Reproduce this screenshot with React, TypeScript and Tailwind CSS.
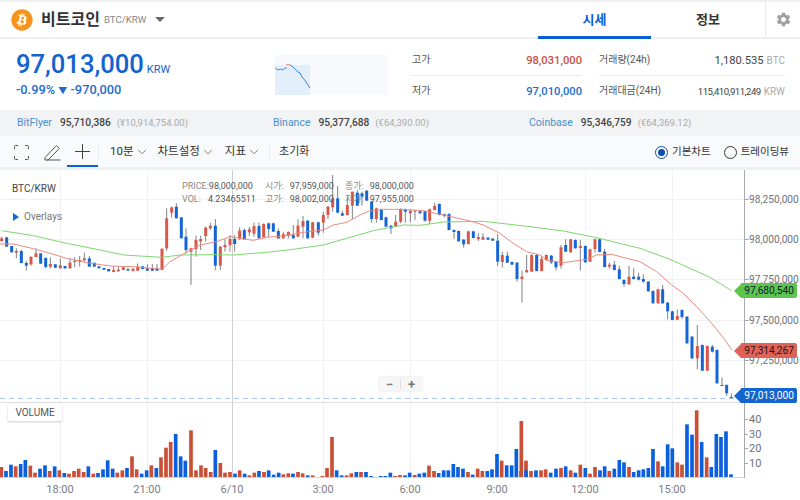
import React from 'react';
import { ChevronDown } from 'lucide-react';
import { FaBitcoin } from 'react-icons/fa';
import { MdSettings } from 'react-icons/md';

type Candle = [number, number, number, number, number, 'r' | 'b'];

const RED = '#d9574b';
const BLUE = '#1565d4';
const VOL_RED = '#c94f36';
const VOL_BLUE = '#0a5fdc';

// x, high, low, body top, body bottom, colour. Units are 1/3 px from the chart's corner.
const candlesA: Candle[] = [
  [5, 200, 215, 205, 213, 'r'], [20, 202, 230, 202, 230, 'b'], [35, 228, 247, 228, 247, 'b'], [49, 235, 265, 243, 248, 'r'],
  [64, 240, 280, 243, 279, 'b'], [79, 272, 302, 279, 287, 'b'], [93, 260, 287, 260, 283, 'r'], [108, 235, 262, 250, 261, 'r'],
  [122, 250, 281, 250, 281, 'b'], [137, 262, 295, 264, 291, 'b'], [151, 262, 295, 282, 290, 'r'], [166, 283, 294, 283, 293, 'b'],
  [181, 265, 296, 286, 295, 'r'], [195, 288, 296, 288, 295, 'b'], [210, 265, 296, 278, 295, 'r'], [224, 262, 292, 273, 276, 'r'],
  [239, 258, 290, 270, 275, 'r'], [253, 248, 275, 265, 271, 'r'], [268, 258, 290, 265, 290, 'b'], [283, 278, 290, 278, 290, 'b'],
  [297, 289, 295, 289, 295, 'b'], [312, 294, 299, 294, 299, 'b'], [326, 297, 304, 297, 304, 'b'], [341, 289, 307, 300, 306, 'r'],
  [355, 288, 305, 299, 304, 'r'], [370, 290, 301, 292, 300, 'r'], [384, 294, 303, 298, 302, 'b'], [399, 295, 304, 296, 303, 'r'],
  [413, 280, 303, 290, 302, 'r'], [428, 288, 298, 289, 297, 'b'], [442, 283, 303, 295, 302, 'b'], [457, 282, 303, 294, 302, 'b'],
  [471, 282, 303, 295, 302, 'b'], [486, 236, 301, 236, 300, 'r'], [500, 115, 242, 145, 235, 'r'], [515, 110, 143, 112, 128, 'r'],
  [529, 100, 145, 110, 145, 'b'], [544, 142, 205, 142, 205, 'b'], [558, 175, 250, 200, 240, 'b'], [573, 233, 345, 235, 245, 'r'],
  [588, 197, 260, 210, 237, 'r'], [602, 197, 240, 207, 214, 'r'], [617, 170, 215, 173, 198, 'r'], [631, 158, 180, 167, 175, 'r'],
  [646, 147, 300, 167, 287, 'b'], [661, 228, 300, 230, 287, 'r'], [675, 208, 245, 225, 232, 'r'], [690, 195, 245, 207, 225, 'r'],
  [704, 195, 245, 207, 222, 'b'], [719, 172, 210, 182, 207, 'r'], [733, 175, 209, 180, 208, 'b'], [748, 170, 198, 178, 187, 'r'],
  [762, 158, 200, 168, 191, 'r'], [777, 158, 205, 168, 205, 'b'], [791, 160, 203, 162, 202, 'r'],
];

const candlesB: Candle[] = [
  [-4, 158, 200, 160, 177, 'b'], [10, 158, 186, 160, 185, 'b'], [25, 175, 206, 183, 205, 'b'], [40, 185, 206, 192, 205, 'r'],
  [55, 184, 205, 186, 198, 'r'], [70, 165, 206, 195, 205, 'b'], [84, 148, 202, 167, 200, 'r'], [99, 138, 205, 153, 170, 'r'],
  [113, 150, 206, 152, 205, 'b'], [128, 155, 204, 157, 203, 'r'], [145, 155, 197, 157, 188, 'b'], [160, 125, 188, 135, 158, 'r'],
  [174, 108, 147, 110, 135, 'r'], [188, 15, 125, 85, 112, 'r'], [203, 48, 130, 85, 128, 'b'], [217, 122, 138, 130, 137, 'b'],
  [232, 80, 136, 105, 135, 'r'], [247, 65, 147, 65, 107, 'r'], [262, 60, 108, 68, 107, 'b'], [276, 65, 107, 70, 80, 'b'],
  [290, 60, 93, 62, 92, 'b'], [305, 93, 158, 95, 147, 'b'], [319, 113, 158, 115, 147, 'r'], [334, 116, 151, 118, 150, 'b'],
  [348, 140, 171, 142, 170, 'b'], [363, 165, 192, 167, 175, 'b'], [377, 135, 171, 155, 170, 'r'], [392, 115, 160, 117, 155, 'r'],
  [406, 116, 158, 118, 125, 'b'], [421, 120, 157, 122, 130, 'r'], [435, 120, 150, 122, 124, 'r'], [450, 122, 131, 124, 130, 'b'],
  [465, 122, 155, 124, 152, 'b'], [479, 116, 162, 118, 152, 'r'], [494, 98, 121, 108, 120, 'r'], [508, 100, 136, 102, 135, 'b'],
  [523, 131, 142, 133, 137, 'b'], [537, 130, 181, 132, 180, 'b'], [552, 178, 207, 180, 186, 'b'], [566, 181, 215, 183, 214, 'b'],
  [581, 207, 233, 209, 223, 'b'], [595, 182, 223, 184, 222, 'r'], [610, 182, 205, 184, 204, 'b'], [625, 190, 213, 201, 207, 'r'],
  [639, 190, 210, 201, 209, 'r'], [654, 201, 210, 203, 209, 'b'], [668, 204, 213, 206, 212, 'b'], [683, 192, 288, 212, 275, 'b'],
  [697, 245, 292, 255, 276, 'r'], [712, 245, 279, 257, 278, 'b'], [726, 274, 285, 276, 284, 'b'], [741, 276, 335, 278, 327, 'b'],
  [756, 302, 398, 320, 327, 'r'], [770, 255, 308, 300, 307, 'r'],
];

const candlesC: Candle[] = [
  [5, 253, 306, 255, 305, 'r'], [20, 253, 304, 255, 303, 'b'], [35, 258, 304, 267, 303, 'r'], [49, 253, 272, 255, 271, 'r'],
  [64, 255, 282, 257, 277, 'b'], [78, 273, 302, 275, 292, 'b'], [93, 225, 296, 232, 287, 'r'], [107, 208, 246, 225, 245, 'b'],
  [122, 207, 248, 208, 247, 'r'], [136, 208, 236, 210, 235, 'b'], [151, 210, 302, 228, 234, 'r'], [166, 226, 278, 228, 277, 'b'],
  [180, 236, 276, 238, 275, 'r'], [195, 206, 248, 208, 237, 'r'], [209, 206, 247, 208, 246, 'b'], [224, 237, 292, 245, 291, 'b'],
  [238, 278, 296, 284, 290, 'r'], [253, 273, 301, 284, 300, 'b'], [268, 287, 328, 298, 327, 'b'], [282, 328, 350, 330, 342, 'b'],
  [297, 288, 344, 320, 343, 'r'], [311, 295, 328, 320, 327, 'b'], [326, 308, 332, 320, 329, 'b'], [340, 313, 338, 327, 335, 'b'],
  [355, 333, 365, 335, 364, 'b'], [369, 361, 401, 363, 400, 'b'], [384, 356, 401, 358, 400, 'r'], [398, 345, 401, 358, 400, 'b'],
  [413, 396, 448, 398, 424, 'b'], [427, 422, 451, 424, 450, 'b'], [442, 418, 450, 438, 449, 'r'], [456, 418, 447, 420, 441, 'b'],
  [471, 438, 521, 440, 520, 'b'], [486, 498, 568, 500, 565, 'b'], [502, 465, 598, 528, 565, 'r'], [517, 523, 603, 525, 602, 'b'],
  [532, 526, 603, 528, 602, 'r'], [547, 525, 548, 530, 545, 'b'], [561, 538, 641, 540, 640, 'b'], [576, 622, 648, 645, 647, 'b'],
  [590, 643, 678, 645, 670, 'b'], [604, 670, 685, 681, 685, 'b'],
];

// x, top, colour for the volume pane; the bars stand on y = 922.
const volumeA: [number, number, 'r' | 'b'][] = [
  [4, 381, 'r'], [18, 393, 'b'], [33, 374, 'b'], [47, 379, 'r'], [62, 372, 'b'], [76, 360, 'b'], [91, 377, 'r'], [105, 398, 'r'],
  [120, 386, 'b'], [135, 376, 'b'], [149, 393, 'r'], [164, 379, 'b'], [178, 391, 'r'], [193, 399, 'b'], [207, 401, 'r'], [222, 393, 'r'],
  [236, 386, 'r'], [251, 396, 'r'], [265, 379, 'b'], [280, 401, 'r'], [294, 399, 'b'], [309, 388, 'b'], [323, 361, 'b'], [338, 386, 'b'],
  [352, 398, 'r'], [367, 391, 'r'], [381, 384, 'b'], [396, 349, 'r'], [410, 388, 'r'], [425, 401, 'b'], [440, 391, 'b'], [454, 376, 'r'],
  [469, 384, 'b'], [483, 352, 'r'], [498, 323, 'r'], [512, 306, 'r'], [527, 282, 'b'], [542, 349, 'b'], [556, 362, 'b'], [573, 271, 'r'],
  [588, 391, 'r'], [603, 376, 'r'], [617, 384, 'r'], [632, 396, 'r'], [646, 330, 'b'], [661, 369, 'r'], [675, 398, 'r'], [690, 396, 'r'],
  [705, 401, 'b'], [719, 391, 'r'], [734, 401, 'b'], [748, 406, 'r'], [763, 398, 'r'], [777, 393, 'b'], [792, 396, 'r'], [806, 391, 'b'],
];

const volumeB: [number, number, 'r' | 'b'][] = [
  [11, 404, 'b'], [26, 398, 'b'], [40, 403, 'r'], [55, 400, 'r'], [69, 401, 'b'], [84, 396, 'r'], [98, 400, 'r'], [113, 406, 'b'],
  [128, 406, 'r'], [142, 411, 'b'], [157, 408, 'r'], [171, 384, 'r'], [186, 291, 'r'], [200, 391, 'b'], [215, 406, 'b'], [230, 406, 'r'],
  [244, 400, 'r'], [259, 396, 'b'], [273, 396, 'r'], [288, 396, 'b'], [303, 408, 'b'], [317, 411, 'r'], [332, 408, 'b'], [346, 408, 'b'],
  [361, 398, 'b'], [375, 408, 'r'], [390, 405, 'r'], [405, 406, 'b'], [419, 398, 'b'], [434, 405, 'r'], [448, 401, 'b'], [463, 398, 'b'],
  [477, 377, 'r'], [492, 393, 'r'], [506, 399, 'b'], [521, 391, 'b'], [535, 391, 'b'], [550, 372, 'b'], [564, 381, 'b'], [579, 386, 'b'],
  [594, 396, 'r'], [608, 404, 'b'], [623, 386, 'r'], [637, 393, 'r'], [652, 393, 'b'], [666, 388, 'b'], [681, 342, 'b'], [695, 362, 'r'],
  [710, 376, 'b'], [725, 376, 'b'], [739, 327, 'b'], [754, 243, 'r'], [768, 362, 'r'],
];

const volumeC: [number, number, 'r' | 'b'][] = [
  [-27, 393, 'r'], [-12, 391, 'b'], [3, 393, 'r'], [18, 391, 'b'], [33, 391, 'r'], [47, 388, 'r'], [62, 398, 'b'], [78, 386, 'b'],
  [93, 384, 'r'], [107, 379, 'b'], [122, 391, 'r'], [136, 398, 'b'], [151, 374, 'r'], [166, 384, 'b'], [180, 401, 'r'], [195, 381, 'r'],
  [210, 391, 'b'], [224, 379, 'b'], [238, 393, 'r'], [253, 386, 'b'], [268, 360, 'b'], [282, 367, 'b'], [297, 381, 'r'], [311, 396, 'b'],
  [326, 391, 'b'], [340, 388, 'b'], [355, 384, 'b'], [369, 327, 'b'], [384, 364, 'r'], [398, 379, 'b'], [413, 313, 'b'], [427, 325, 'b'],
  [442, 367, 'r'], [456, 374, 'r'], [471, 253, 'b'], [486, 284, 'b'], [500, 211, 'r'], [515, 306, 'b'], [530, 352, 'r'], [544, 381, 'b'],
  [559, 282, 'b'], [573, 291, 'b'], [588, 274, 'b'], [603, 403, 'b'],
];

const redLine =
  '0,222 40,222 100,236 150,250 200,265 260,278 330,288 400,290 486,298 510,275 545,255 600,225 650,215 690,200 720,205 760,211 800,202 ' +
  '850,198 910,187 970,180 1000,165 1040,157 1080,135 1105,124 1150,118 1210,118 1270,122 1330,135 1410,153 1450,165 1500,190 1540,220 1580,245 1620,255 ' +
  '1640,270 1690,278 1760,268 1790,255 1835,253 1880,265 1920,275 1970,305 2015,345 2050,370 2090,410 2135,460 2175,510 2195,540';

const greenLine =
  '5,182 100,197 200,220 300,240 370,255 486,262 540,255 640,254 700,255 800,247 ' +
  '880,238 970,225 1040,205 1120,182 1210,165 1260,166 1330,156 1450,154 1530,163 1590,170 ' +
  '1690,183 1790,203 1920,235 2010,268 2130,322 2195,362';

const gridY = [199, 239, 279, 320, 360];
const gridX = [60.5, 147.5, 323.5, 410.5, 497.5, 585.5, 672.5];
const priceTicks: [number, string][] = [
  [199, '98,250,000'], [239, '98,000,000'], [279, '97,750,000'], [320, '97,500,000'], [360, '97,250,000'],
];
const volumeTicks: [number, string][] = [[419, '40'], [434, '30'], [448, '20'], [463, '10']];
const timeTicks: [number, string][] = [
  [60, '18:00'], [147, '21:00'], [232, '6/10'], [323, '3:00'], [410, '6:00'], [497, '9:00'], [585, '12:00'], [672, '15:00'],
];

const Candles = ({ data, dx }: { data: Candle[]; dx: number }) => (
  <g transform={`translate(${dx} 0)`}>
    {data.map(([x, hi, lo, top, bot, c], i) => (
      <g key={i}>
        <line x1={x} x2={x} y1={hi} y2={lo} stroke="#5c5f66" strokeWidth={2.4} />
        <rect x={x - 4.5} y={top} width={9} height={Math.max(bot - top, 3)} fill={c === 'r' ? RED : BLUE} />
      </g>
    ))}
  </g>
);

const VolumeBars = ({ data, dx }: { data: [number, number, 'r' | 'b'][]; dx: number }) => (
  <g transform={`translate(${dx} 0)`}>
    {data.map(([x, top, c], i) => (
      <rect key={i} x={x - 5.5} y={top + 510} width={11} height={412 - top} fill={c === 'r' ? VOL_RED : VOL_BLUE} />
    ))}
  </g>
);

const Chart = () => (
  <svg viewBox="0 0 800 330" className="block w-full h-full">
    {gridY.map((y) => (
      <line key={y} x1={0} x2={745} y1={y - 170 + 0.5} y2={y - 170 + 0.5} stroke="#f0f1f4" />
    ))}
    {gridX.map((x) => (
      <line key={x} x1={x} x2={x} y1={0} y2={308} stroke="#f0f1f4" />
    ))}
    <line x1={232.5} x2={232.5} y1={0} y2={308} stroke="#cfcfd2" />

    <g transform="scale(0.33333)">
      <Candles data={candlesA} dx={0} />
      <Candles data={candlesB} dx={810} />
      <Candles data={candlesC} dx={1590} />
      <polyline points={greenLine} fill="none" stroke="#7ed56f" strokeWidth={3} />
      <polyline points={redLine} fill="none" stroke="#ea8a80" strokeWidth={3} />
      <VolumeBars data={volumeA} dx={0} />
      <VolumeBars data={volumeB} dx={810} />
      <VolumeBars data={volumeC} dx={1590} />
    </g>

    <line x1={0} x2={745} y1={228.5} y2={228.5} stroke="#a9c9f2" strokeWidth={1} strokeDasharray="5 4" />
    <line x1={0} x2={745} y1={232.5} y2={232.5} stroke="#dcdde0" />
    <line x1={0} x2={745} y1={307.5} y2={307.5} stroke="#d5d6d9" />
    <line x1={744.5} x2={744.5} y1={0} y2={308} stroke="#a8a9ad" />

    {priceTicks.map(([y, label]) => (
      <g key={y}>
        <line x1={745} x2={749} y1={y - 170 + 0.5} y2={y - 170 + 0.5} stroke="#a8a9ad" />
        <text x={749} y={y - 170 + 4} fontSize={10.2} fill="#6f7278">{label}</text>
      </g>
    ))}
    {volumeTicks.map(([y, label]) => (
      <g key={y}>
        <line x1={745} x2={748} y1={y - 170 + 0.5} y2={y - 170 + 0.5} stroke="#a8a9ad" />
        <text x={749} y={y - 170 + 4} fontSize={11} fill="#6f7278">{label}</text>
      </g>
    ))}
    {timeTicks.map(([x, label]) => (
      <text key={x} x={x} y={323} fontSize={11} fill="#7a7d83" textAnchor="middle">{label}</text>
    ))}
  </svg>
);

const PriceTag = ({ top, color, text, label }: { top: string; color: string; text: string; label: string }) => (
  <div className={`absolute right-[3px] flex h-[15px] items-center ${top}`}>
    <div className={`h-0 w-0 border-y-[7.5px] border-y-transparent border-r-[7px] ${color}`} />
    <div className={`rounded-r-[2px] px-[3px] text-[10.2px] leading-[15px] ${text}`}>{label}</div>
  </div>
);

const Stat = ({ label, value, unit, valueClass }: { label: string; value: string; unit?: string; valueClass: string }) => (
  <div className="flex h-[30px] items-center justify-between pt-[2px]">
    <span className="mb-[3px] text-[10px] text-[#555]">{label}</span>
    <span className={valueClass}>
      {value}
      {unit && <span className="ml-[3px] text-[10px] tracking-normal text-[#aaa]">{unit}</span>}
    </span>
  </div>
);

const Exchange = ({ name, price, local }: { name: string; price: string; local: string }) => (
  <div className="flex w-[256px] items-center pl-[17px] text-[10.5px]">
    <span className="mr-[8px] text-[#4a90cc]">{name}</span>
    <span className="mr-[6px] text-[10.2px] font-medium text-[#444]">{price}</span>
    <span className="text-[9.5px] text-[#aaa]">{local}</span>
  </div>
);

const Menu = ({ label, className }: { label: string; className: string }) => (
  <div className={`flex items-center gap-[1px] text-[11.5px] text-[#333] ${className}`}>
    {label}
    <ChevronDown size={14} strokeWidth={1.4} className="text-[#666]" />
  </div>
);

export default function App() {
  return (
    <div className="w-[800px] h-[500px] overflow-hidden bg-white font-['Roboto','Noto_Sans_CJK_KR',sans-serif]">
      <div className="h-[2px] bg-[#eef0f3]" />

      {/* Header */}
      <div className="flex h-[37px] items-stretch border-b-2 border-[#eef0f3]">
        <div className="flex flex-1 items-center pl-[11px]">
          <span className="flex h-[21px] w-[21px] items-center justify-center rounded-full bg-white">
            <FaBitcoin size={22} className="shrink-0 text-[#f7931a]" />
          </span>
          <span className="ml-[9px] text-[16px] font-bold text-[#333]">비트코인</span>
          <span className="ml-[4px] mt-[2px] text-[9.7px] text-[#888]">BTC/KRW</span>
          <span className="ml-[9px] h-0 w-0 border-x-[5.5px] border-t-[5.5px] border-x-transparent border-t-[#666]" />
        </div>
        <div className="-mb-[2px] flex w-[113px] items-center justify-center border-b-[3px] border-[#0a5fd6] pt-[1px] text-[13px] font-bold text-[#0a5fd6]">시세</div>
        <div className="flex w-[114px] items-center justify-center text-[13px] font-bold text-[#333]">정보</div>
        <div className="flex w-[35px] items-center justify-center border-l border-[#e8eaed]">
          <MdSettings size={17} className="text-[#a0a0a0]" />
        </div>
      </div>

      {/* Summary */}
      <div className="flex h-[71px]">
        <div className="w-[275px] pl-[16px] pt-[7px]">
          <div className="flex items-baseline">
            <span className="text-[25.600px] font-medium leading-[36px] text-[#1263cf]">97,013,000</span>
            <span className="ml-[3px] text-[11px] text-[#1263cf]">KRW</span>
          </div>
          <div className="text-[12.800px] font-medium leading-[16px] text-[#1e6ccb]">
            -0.99% <span className="text-[9px]">▼</span> -970,000
          </div>
        </div>
        <div className="mt-[16px] h-[40px] w-[113px] bg-[#f7f9fc]">
          <svg viewBox="0 0 113 40" className="block h-full w-full">
            <rect x={0} y={10} width={35} height={30} fill="#e3eefb" />
            <polyline points="0,13 3,15 6,14 8,15 10,13 12,13" fill="none" stroke="#2f74d0" strokeWidth={0.8} />
            <polyline points="11,10 13,9 15,10" fill="none" stroke="#d9574b" strokeWidth={0.8} />
            <polyline points="15,10 18,12 21,15 23,17 25,18 27,22 29,24 31,27 33,30 35,33" fill="none" stroke="#2f74d0" strokeWidth={0.9} />
          </svg>
        </div>
        <div className="ml-[24px] w-[170px] pt-[6px]">
          <div className="border-b border-[#e8eaed]">
            <Stat label="고가" value="98,031,000" valueClass="text-[11.200px] font-medium text-[#c9503f]" />
          </div>
          <Stat label="저가" value="97,010,000" valueClass="text-[11.200px] font-medium text-[#1e6ccb]" />
        </div>
        <div className="ml-[17px] w-[186px] pt-[6px]">
          <div className="border-b border-[#e8eaed]">
            <Stat label="거래량(24h)" value="1,180.535" unit="BTC" valueClass="text-[11.200px] text-[#444]" />
          </div>
          <Stat label="거래대금(24H)" value="115,410,911,249" unit="KRW" valueClass="text-[9.600px] tracking-[-0.5px] text-[#444]" />
        </div>
      </div>

      {/* Exchanges */}
      <div className="flex h-[26px] bg-[#f1f3f5]">
        <Exchange name="BitFlyer" price="95,710,386" local="(¥10,914,754.00)" />
        <Exchange name="Binance" price="95,377,688" local="(€64,390.00)" />
        <Exchange name="Coinbase" price="95,346,759" local="(€64,369.12)" />
      </div>

      {/* Toolbar */}
      <div className="mt-[1px] flex h-[30px] items-center bg-[#f9fafc] text-[#333]">
        <div className="ml-[14px] flex w-[53px] items-center">
          <svg width="15" height="15" viewBox="0 0 15 15" fill="none" stroke="#555" strokeWidth="1">
            <path d="M.5 4V1.5a1 1 0 0 1 1-1H4M11 .5h2.5a1 1 0 0 1 1 1V4M14.5 11v2.500a1 1 0 0 1-1 1H11M4 14.500H1.500a1 1 0 0 1-1-1V11" />
          </svg>
          <svg className="ml-[15px]" width="17" height="17" viewBox="0 0 17 17" fill="none" stroke="#555" strokeWidth="1">
            <path d="M1 13.500 11.500 2.500a1.500 1.500 0 0 1 2.200 0l.8.8a1.500 1.500 0 0 1 0 2.100L4 16H1zM3 16h13.500" />
          </svg>
        </div>
        <div className="flex h-[30px] w-[31px] items-center justify-center border-b-2 border-[#0a5fd6]">
          <svg width="15" height="15" viewBox="0 0 15 15" stroke="#444" strokeWidth="1">
            <path d="M7.500 0v15M0 7.500h15" />
          </svg>
        </div>
        <div className="h-[12px] w-px bg-[#e4e6ea]" />
        <Menu label="10분" className="ml-[11px]" />
        <Menu label="차트설정" className="ml-[9px]" />
        <Menu label="지표" className="ml-[10px]" />
        <div className="ml-[8px] h-[12px] w-px bg-[#e4e6ea]" />
        <div className="ml-[9px] text-[11px] text-[#333]">초기화</div>
        <div className="ml-auto flex items-center pr-[11px] text-[10.500px] text-[#333]">
          <span className="flex h-[13px] w-[13px] items-center justify-center rounded-full border border-[#0a4fb0]">
            <span className="h-[7px] w-[7px] rounded-full bg-[#0a4fb0]" />
          </span>
          <span className="ml-[4px]">기본차트</span>
          <span className="ml-[13px] h-[13px] w-[13px] rounded-full border border-[#333]" />
          <span className="ml-[4px]">트레이딩뷰</span>
        </div>
      </div>

      <div className="h-[3px] bg-[#eef0f3]" />

      {/* Chart canvas */}
      <div className="relative h-[330px]">
        <Chart />
        <div className="absolute left-[12px] top-[11px] text-[10px] text-[#444]">BTC/KRW</div>
        <div className="absolute left-[13px] top-[39px] flex items-center text-[10px] text-[#777]">
          <span className="h-0 w-0 border-y-[4px] border-l-[6px] border-y-transparent border-l-[#1565d4]" />
          <span className="ml-[5px]">Overlays</span>
        </div>

        <div className="absolute left-[182px] top-[10px] grid grid-cols-[83px_80px_1fr] gap-y-[1px] text-[9px] leading-[12px] text-[#888]">
          <div>PRICE:<span className="text-[#555]">98,000,000</span></div>
          <div>시가:<span className="ml-[6px] text-[#555]">97,959,000</span></div>
          <div>종가:<span className="ml-[6px] text-[#555]">98,000,000</span></div>
          <div>VOL:<span className="ml-[7px] text-[#555]">4.23465511</span></div>
          <div>고가:<span className="ml-[6px] text-[#555]">98,002,000</span></div>
          <div>저가:<span className="ml-[6px] text-[#555]">97,955,000</span></div>
        </div>

        <div className="absolute left-[379px] top-[207px] flex h-[14px] w-[43px] items-center bg-[#f6f6f7] text-[13px] font-bold leading-none text-[#777] shadow-[0_0_2px_rgba(0,0,0,0.15)]">
          <span className="flex-1 text-center">−</span>
          <span className="h-[10px] w-px bg-[#ddd]" />
          <span className="flex-1 text-center">+</span>
        </div>

        <div className="absolute left-[8px] top-[234px] flex h-[17px] w-[54px] items-center justify-center bg-white text-[10px] text-[#555] shadow-[0_1px_2px_rgba(0,0,0,0.2)]">VOLUME</div>

        <PriceTag top="top-[113px]" color="border-r-[#5cc44f]" text="bg-[#5cc44f] text-[#123]" label="97,680,540" />
        <PriceTag top="top-[173px]" color="border-r-[#df6259]" text="bg-[#df6259] text-[#2a1210]" label="97,314,267" />
        <PriceTag top="top-[218px]" color="border-r-[#1465d0]" text="bg-[#1465d0] text-white" label="97,013,000" />
      </div>
    </div>
  );
}
